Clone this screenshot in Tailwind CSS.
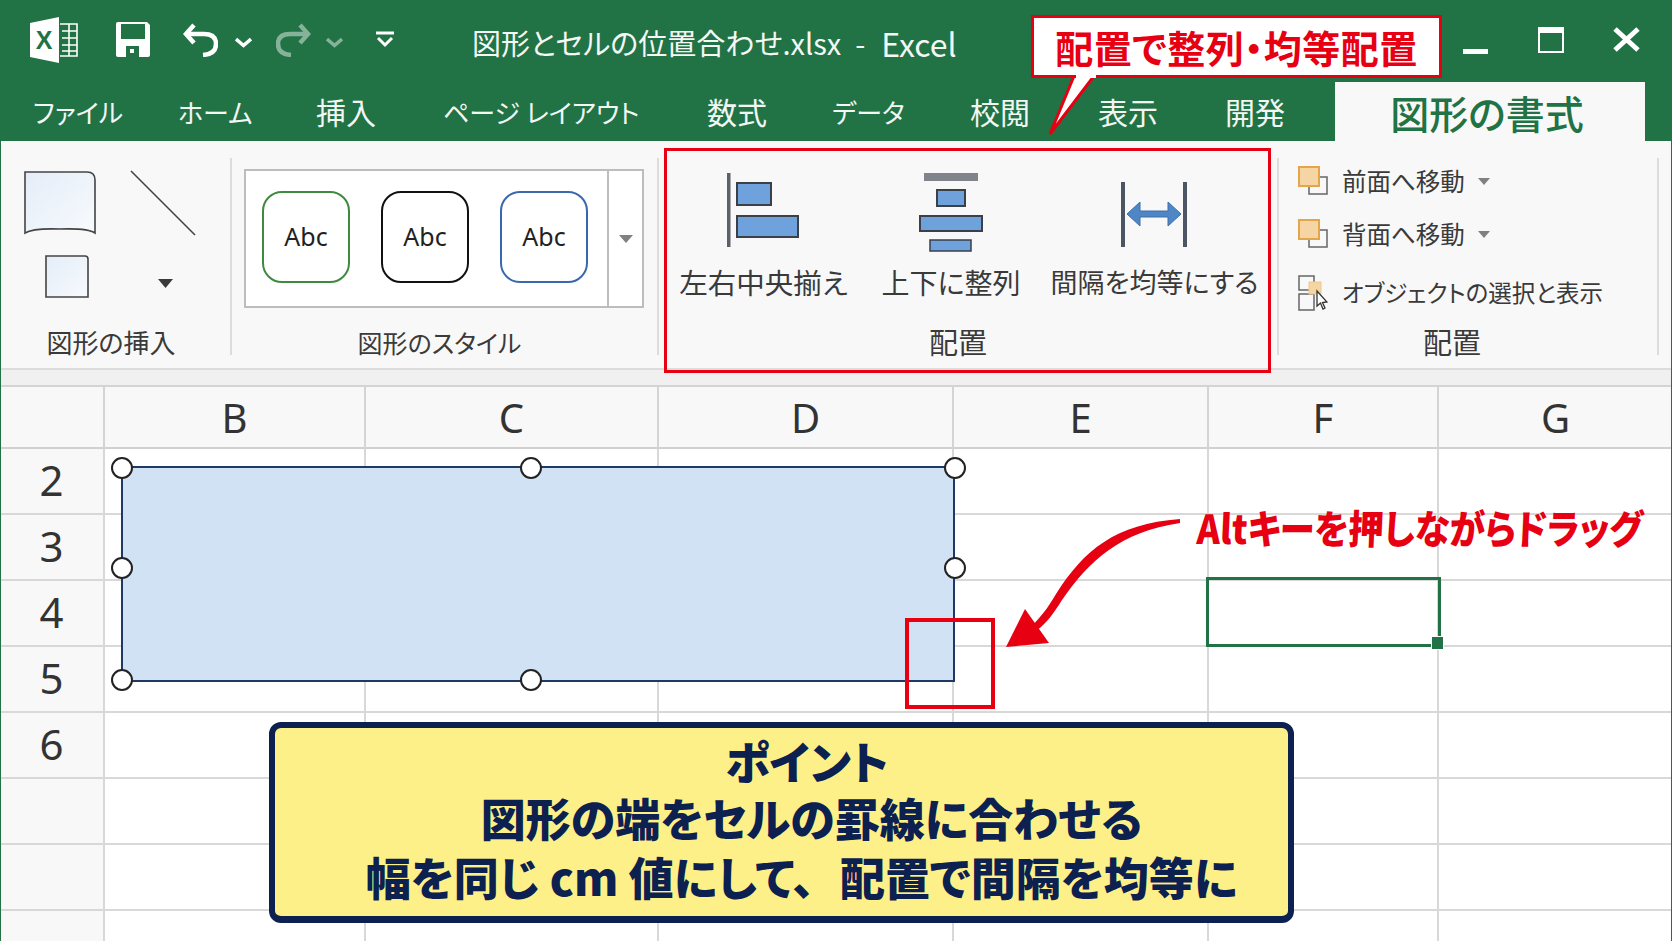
<!DOCTYPE html>
<html lang="ja">
<head>
<meta charset="UTF-8">
<title>図形とセルの位置合わせ</title>
<script src="https://cdn.jsdelivr.net/npm/@tailwindcss/browser@4"></script>
</head>
<body class="w-[1672px] h-[941px] overflow-hidden relative bg-white font-['Noto_Sans_CJK_JP',sans-serif] [font-feature-settings:'palt'] text-[#333]">

<!-- title bar -->
<header class="h-[82px] bg-[#217346] flex items-center pl-[30px] text-white">
  <svg class="w-[48px] h-[46px] mt-[-2px] shrink-0" viewBox="30 18 48 46">
    <path d="M30 24 L59 18 V64 L30 58Z" fill="#fff"/>
    <text x="44" y="50" font-size="25" font-weight="700" text-anchor="middle" fill="#217346" font-family="Liberation Sans">X</text>
    <path d="M60 25 H77 V57 H60 M62 32 H77 M62 39 H77 M62 46 H77 M62 52 H77 M69 25 V57" fill="none" stroke="#fff" stroke-width="1.6"/>
  </svg>
  <svg class="w-[34px] h-[36px] ml-[38px] mt-[-2px] shrink-0" viewBox="116 23 34 36">
    <path d="M118 23 H147 L150 26 V56 Q150 58 148 58 H118 Q116 58 116 56 V25 Q116 23 118 23Z" fill="#fff"/>
    <rect x="121" y="25" width="24" height="15" fill="#217346"/>
    <rect x="126" y="47" width="13" height="11" fill="#217346"/>
    <rect x="130" y="50" width="4" height="4" fill="#fff"/>
  </svg>
  <svg class="w-[35px] h-[34px] ml-[33px] mt-[-2px] shrink-0" viewBox="183 24 35 34" fill="none" stroke="#fff" stroke-width="4.5">
    <path d="M194 26 L186 35 L194 44"/>
    <path d="M186 35 H204 Q216 35 216 45 Q216 55 203 56"/>
  </svg>
  <svg class="w-[17px] h-[11px] ml-[17px] mt-[2px] shrink-0" viewBox="0 0 17 11" fill="none" stroke="#fff" stroke-width="3.5"><path d="M1 2 L8.500 8.500 L16 2"/></svg>
  <svg class="w-[35px] h-[34px] ml-[24px] mt-[-2px] shrink-0 opacity-45" viewBox="183 24 35 34" fill="none" stroke="#fff" stroke-width="4.5">
    <path d="M207 26 L215 35 L207 44"/>
    <path d="M215 35 H197 Q185 35 185 45 Q185 55 198 56"/>
  </svg>
  <svg class="w-[17px] h-[11px] ml-[15px] mt-[2px] shrink-0 opacity-45" viewBox="0 0 17 11" fill="none" stroke="#fff" stroke-width="3.5"><path d="M1 2 L8.500 8.500 L16 2"/></svg>
  <svg class="w-[18px] h-[17px] ml-[33px] mt-[-4px] shrink-0" viewBox="0 0 18 17" fill="none" stroke="#fff" stroke-width="3"><path d="M0 2 H18"/><path d="M2 7 L9 14 L16 7"/></svg>
  <div class="ml-[78px] text-[29px] font-normal whitespace-nowrap text-[#f4f8f5] mt-[4px] flex items-center">
    <span>図形とセルの位置合わせ.xlsx</span>
    <span class="ml-[14px]">-</span>
    <span class="ml-[16px] text-[32px]">Excel</span>
  </div>
  <div class="ml-auto mr-[32px] flex items-center">
    <div class="w-[25px] h-[5px] bg-white mt-[20px]"></div>
    <div class="w-[26px] h-[26px] ml-[50px] border-2 border-t-[6px] border-white mt-[-3px]"></div>
    <svg class="w-[27px] h-[25px] ml-[49px] mt-[-3px]" viewBox="0 0 27 25" fill="none" stroke="#fff" stroke-width="5"><path d="M2 2 L25 23 M25 2 L2 23"/></svg>
  </div>
</header>

<!-- tabs -->
<nav class="h-[59px] bg-[#217346] flex items-center pl-[33px] text-[30px] text-[#f2f7f4] whitespace-nowrap">
  <div class="w-[145px] text-[26px]">ファイル</div>
  <div class="w-[138px] text-[26px]">ホーム</div>
  <div class="w-[127px]">挿入</div>
  <div class="w-[264px] text-[26px]">ページ レイアウト</div>
  <div class="w-[125px]">数式</div>
  <div class="w-[138px] text-[26px]">データ</div>
  <div class="w-[128px]">校閲</div>
  <div class="w-[127px]">表示</div>
  <div class="w-[110px]">開発</div>
  <div class="w-[310px] h-full bg-[#f8f8f8] text-[#217346] text-[39px] font-medium flex items-center justify-center pt-[2px] pr-[6px]">図形の書式</div>
</nav>

<!-- ribbon -->
<section class="h-[229px] bg-[#f8f8f8] border-b-2 border-b-[#dcdcdc] flex pt-[17px] text-[#3a3a3a]">
  <!-- insert shapes -->
  <div class="w-[232px] h-[197px] border-r-2 border-[#dcdcdc] flex flex-col shrink-0">
    <svg class="w-[230px] h-[165px] shrink-0" viewBox="0 158 230 165">
      <defs><linearGradient id="shapeFill" x1="0" y1="0" x2="1" y2="1"><stop offset="0" stop-color="#e4edf8"/><stop offset="1" stop-color="#f8fafd"/></linearGradient></defs>
      <path d="M25 172 H87 Q95 172 95 180 V233 Q88 228 60 229 Q33 228 25 233Z" fill="url(#shapeFill)" stroke="#444" stroke-width="1.600"/>
      <path d="M131 171 L195 235" stroke="#444" stroke-width="1.600"/>
      <path d="M46 256 H85 Q88 256 88 259 V297 H46Z" fill="url(#shapeFill)" stroke="#444" stroke-width="1.600"/>
      <path d="M158 279 H173 L165.500 288Z" fill="#3a3a3a"/>
    </svg>
    <div class="h-[38px] mb-[-6px] shrink-0 pr-[8px] text-center text-[26px] leading-[38px] whitespace-nowrap">図形の挿入</div>
  </div>
  <!-- shape styles -->
  <div class="w-[427px] h-[197px] border-r-2 border-[#dcdcdc] flex flex-col shrink-0">
    <div class="h-[165px] shrink-0 pl-[12px] pt-[11px]">
      <div class="w-[400px] h-[139px] bg-white border-2 border-[#bdbdbd] flex font-['Noto_Sans',sans-serif] text-[25px] text-[#222]">
        <div class="w-[361px] flex items-center pl-[16px] gap-[31px] pb-[4px]">
          <div class="w-[88px] h-[92px] rounded-[20px] border-2 border-[#3e8a3e] flex items-center justify-center">Abc</div>
          <div class="w-[88px] h-[92px] rounded-[20px] border-2 border-[#111] flex items-center justify-center">Abc</div>
          <div class="w-[88px] h-[92px] rounded-[20px] border-2 border-[#3b68ad] flex items-center justify-center">Abc</div>
        </div>
        <div class="flex-1 border-l-2 border-[#bdbdbd] flex items-center justify-center"><div class="w-0 h-0 border-x-[7px] border-x-transparent border-t-[8px] border-t-[#808080]"></div></div>
      </div>
    </div>
    <div class="h-[38px] mb-[-6px] shrink-0 pr-[10px] text-center text-[25px] leading-[38px] whitespace-nowrap">図形のスタイル</div>
  </div>
  <!-- arrange buttons -->
  <div class="w-[620px] h-[197px] border-r-2 border-[#dcdcdc] flex flex-col shrink-0">
    <div class="h-[165px] shrink-0 flex pl-[21px]">
      <div class="w-[167px] flex flex-col items-center">
        <svg class="w-[80px] h-[100px]" viewBox="723 158 80 100">
          <rect x="726" y="173" width="3.500" height="74" fill="#5c6068"/>
          <rect x="736" y="183" width="34" height="22" fill="#6fa2dc" stroke="#3a3f48" stroke-width="2"/>
          <rect x="736" y="216" width="61" height="21" fill="#6fa2dc" stroke="#3a3f48" stroke-width="2"/>
        </svg>
        <div class="text-[28.5px] leading-[48px] whitespace-nowrap">左右中央揃え</div>
      </div>
      <div class="w-[138px] ml-[35px] flex flex-col items-center">
        <svg class="w-[80px] h-[100px]" viewBox="911 158 80 100">
          <rect x="924" y="173" width="54" height="8" fill="#80838a"/>
          <rect x="937" y="190" width="28" height="16" fill="#6fa2dc" stroke="#3a3f48" stroke-width="2"/>
          <rect x="920" y="216" width="62" height="15" fill="#6fa2dc" stroke="#3a3f48" stroke-width="2"/>
          <rect x="930" y="240" width="41" height="11" fill="#6fa2dc" stroke="#3a3f48" stroke-width="1.500"/>
        </svg>
        <div class="text-[28px] leading-[48px] whitespace-nowrap">上下に整列</div>
      </div>
      <div class="w-[207px] ml-[31px] flex flex-col items-center">
        <svg class="w-[80px] h-[100px]" viewBox="1115 158 80 100">
          <rect x="1121" y="182" width="4" height="65" fill="#4c5563"/>
          <rect x="1183" y="182" width="4" height="65" fill="#4c5563"/>
          <path d="M1127 214 L1140 202 V211 H1168 V202 L1181 214 L1168 226 V217 H1140 V226Z" fill="#4f86c6" stroke="#3f6ea8" stroke-width="1"/>
        </svg>
        <div class="text-[27px] leading-[48px] whitespace-nowrap">間隔を均等にする</div>
      </div>
    </div>
    <div class="h-[38px] mb-[-6px] shrink-0 text-center text-[29px] leading-[36px] pr-[20px]">配置</div>
  </div>
  <!-- order -->
  <div class="w-[380px] h-[197px] border-r-2 border-[#dcdcdc] flex flex-col shrink-0 pl-[19px]">
    <div class="h-[165px] shrink-0 text-[24.5px] whitespace-nowrap">
      <div class="h-[46px] flex items-center gap-[13px]">
        <svg class="w-[30px] h-[30px] shrink-0 mr-[1px]" viewBox="0 0 30 30"><path d="M22 11 H29 V28 H11 V21" fill="none" stroke="#666" stroke-width="1.500"/><rect x="1" y="1" width="20" height="19" fill="#f5d5a3" stroke="#e5a54b" stroke-width="2"/></svg>
        <span>前面へ移動</span>
        <div class="w-0 h-0 border-x-[6px] border-x-transparent border-t-[7px] border-t-[#808080]"></div>
      </div>
      <div class="h-[60px] flex items-center gap-[13px]">
        <svg class="w-[30px] h-[30px] shrink-0 mr-[1px]" viewBox="0 0 30 30"><path d="M22 11 H29 V28 H11 V21" fill="none" stroke="#666" stroke-width="1.500"/><rect x="1" y="1" width="20" height="19" fill="#f5d5a3" stroke="#e5a54b" stroke-width="2"/></svg>
        <span>背面へ移動</span>
        <div class="w-0 h-0 border-x-[6px] border-x-transparent border-t-[7px] border-t-[#808080]"></div>
      </div>
      <div class="h-[58px] flex items-center gap-[14px] text-[23.5px]">
        <svg class="w-[30px] h-[36px] shrink-0" viewBox="0 0 30 36">
          <rect x="1" y="1" width="15" height="14" fill="none" stroke="#666" stroke-width="1.500"/>
          <rect x="1" y="19" width="15" height="16" fill="none" stroke="#666" stroke-width="1.500"/>
          <rect x="11" y="7" width="12" height="12" fill="#f5d5a3" stroke="#f0c88c"/>
          <path d="M19 16 V31 L22.500 28 L25 34 L27 33 L24.500 27.500 L29 27Z" fill="#fff" stroke="#333" stroke-width="1.300"/>
        </svg>
        <span>オブジェクトの選択と表示</span>
      </div>
    </div>
    <div class="h-[38px] mb-[-6px] shrink-0 text-center text-[29px] leading-[36px] pr-[51px]">配置</div>
  </div>
</section>

<!-- gap strip -->
<div class="h-[17px] bg-[#f0f0f0] border-b-2 border-[#d4d4d4]"></div>

<!-- sheet -->
<main class="text-[40px] font-['Noto_Sans',sans-serif] text-[#333]">
  <div class="grid grid-cols-[105px_261px_293px_295px_255px_230px_233px] h-[62px] bg-[#f8f8f8] border-b-2 border-[#d0d0d0] text-center leading-[62px] divide-x-2 divide-[#d4d4d4]">
    <div></div><div>B</div><div>C</div><div>D</div><div>E</div><div>F</div><div>G</div>
  </div>
  <div class="grid grid-cols-[105px_261px_293px_295px_255px_230px_233px] h-[66px] border-b-2 border-[#d8d8d8] divide-x-2 divide-[#d8d8d8]">
    <div class="bg-[#f8f8f8] text-center text-[42px] leading-[62px]">2</div><div></div><div></div><div></div><div></div><div></div><div></div>
  </div>
  <div class="grid grid-cols-[105px_261px_293px_295px_255px_230px_233px] h-[66px] border-b-2 border-[#d8d8d8] divide-x-2 divide-[#d8d8d8]">
    <div class="bg-[#f8f8f8] text-center text-[42px] leading-[62px]">3</div><div></div><div></div><div></div><div></div><div></div><div></div>
  </div>
  <div class="grid grid-cols-[105px_261px_293px_295px_255px_230px_233px] h-[66px] border-b-2 border-[#d8d8d8] divide-x-2 divide-[#d8d8d8]">
    <div class="bg-[#f8f8f8] text-center text-[42px] leading-[62px]">4</div><div></div><div></div><div></div><div></div><div></div><div></div>
  </div>
  <div class="grid grid-cols-[105px_261px_293px_295px_255px_230px_233px] h-[66px] border-b-2 border-[#d8d8d8] divide-x-2 divide-[#d8d8d8]">
    <div class="bg-[#f8f8f8] text-center text-[42px] leading-[62px]">5</div><div></div><div></div><div></div><div></div><div></div><div></div>
  </div>
  <div class="grid grid-cols-[105px_261px_293px_295px_255px_230px_233px] h-[66px] border-b-2 border-[#d8d8d8] divide-x-2 divide-[#d8d8d8]">
    <div class="bg-[#f8f8f8] text-center text-[42px] leading-[62px]">6</div><div></div><div></div><div></div><div></div><div></div><div></div>
  </div>
  <div class="grid grid-cols-[105px_261px_293px_295px_255px_230px_233px] h-[66px] border-b-2 border-[#d8d8d8] divide-x-2 divide-[#d8d8d8]">
    <div class="bg-[#f8f8f8]"></div><div></div><div></div><div></div><div></div><div></div><div></div>
  </div>
  <div class="grid grid-cols-[105px_261px_293px_295px_255px_230px_233px] h-[66px] border-b-2 border-[#d8d8d8] divide-x-2 divide-[#d8d8d8]">
    <div class="bg-[#f8f8f8]"></div><div></div><div></div><div></div><div></div><div></div><div></div>
  </div>
  <div class="grid grid-cols-[105px_261px_293px_295px_255px_230px_233px] h-[66px] divide-x-2 divide-[#d8d8d8]">
    <div class="bg-[#f8f8f8]"></div><div></div><div></div><div></div><div></div><div></div><div></div>
  </div>
</main>

<!-- window edges -->
<div class="absolute left-0 top-[141px] w-px h-[800px] bg-[#217346]"></div>
<div class="absolute right-0 top-[141px] w-px h-[800px] bg-[#217346]"></div>

<!-- red frame round the arrange group -->
<div class="absolute left-[664px] top-[148px] w-[607px] h-[225px] border-[3.5px] border-[#e60012]"></div>

<!-- callout -->
<svg class="absolute left-[1040px] top-[70px] w-[70px] h-[70px]" viewBox="1040 70 70 70">
  <path d="M1074 76 L1050 134 L1094 76" fill="#fff" stroke="#e60012" stroke-width="3"/>
</svg>
<div class="absolute left-[1031px] top-[15px] w-[411px] h-[63px] bg-white border-[3px] border-[#e60012] flex items-center justify-center text-[38px] tracking-[0.5px] font-bold text-[#e60012] whitespace-nowrap">配置で整列・均等配置</div>
<svg class="absolute left-[1070px] top-[72px] w-[30px] h-[8px]" viewBox="0 0 30 8"><rect x="6" y="0" width="20" height="6" fill="#fff"/></svg>

<!-- selected shape -->
<div class="absolute left-[121px] top-[466px] w-[834px] h-[216px] bg-[#d2e2f5] border-2 border-[#1f3864]"></div>
<div class="absolute left-[111px] top-[457px] w-[22px] h-[22px] rounded-full bg-white border-2 border-[#222]"></div>
<div class="absolute left-[520px] top-[457px] w-[22px] h-[22px] rounded-full bg-white border-2 border-[#222]"></div>
<div class="absolute left-[944px] top-[457px] w-[22px] h-[22px] rounded-full bg-white border-2 border-[#222]"></div>
<div class="absolute left-[111px] top-[557px] w-[22px] h-[22px] rounded-full bg-white border-2 border-[#222]"></div>
<div class="absolute left-[944px] top-[557px] w-[22px] h-[22px] rounded-full bg-white border-2 border-[#222]"></div>
<div class="absolute left-[111px] top-[669px] w-[22px] h-[22px] rounded-full bg-white border-2 border-[#222]"></div>
<div class="absolute left-[520px] top-[669px] w-[22px] h-[22px] rounded-full bg-white border-2 border-[#222]"></div>

<!-- red marker, arrow, note -->
<div class="absolute left-[905px] top-[618px] w-[90px] h-[91px] border-[4px] border-[#e60012]"></div>
<svg class="absolute left-[1000px] top-[515px] w-[190px] h-[140px]" viewBox="1000 515 190 140">
  <path d="M1180 523 C1120 532 1090 560 1062 600 C1052 616 1045 625 1032 634 L1028 630 C1040 618 1048 608 1056 594 C1084 550 1115 524 1180 519Z" fill="#e60012"/>
  <path d="M1006 647 L1025 609 L1049 643Z" fill="#e60012"/>
</svg>
<div class="absolute left-[1197px] top-[497px] text-[40px] leading-[60px] font-black text-[#e60012] whitespace-nowrap origin-left scale-x-[0.885] -skew-x-3">Altキーを押しながらドラッグ</div>

<!-- active cell -->
<div class="absolute left-[1206px] top-[577px] w-[235px] h-[70px] border-[3px] border-[#217346]"></div>
<div class="absolute left-[1431px] top-[636px] w-[13px] h-[14px] bg-[#217346] border border-white"></div>

<!-- point box -->
<div class="absolute left-[269px] top-[722px] w-[1025px] h-[201px] bg-[#fdf088] border-[6px] border-b-[7px] border-[#0d2150] rounded-[12px] flex flex-col items-center justify-center pb-[8px] text-[45px] leading-[57px] font-black text-[#0d2150] whitespace-nowrap">
  <div class="ml-[51px]">ポイント</div>
  <div class="ml-[60px] mb-[2px]">図形の端をセルの罫線に合わせる</div>
  <div class="ml-[40px]">幅を同じ cm 値にして、<span class="ml-[25px]">配置で間隔を均等に</span></div>
</div>

</body>
</html>
